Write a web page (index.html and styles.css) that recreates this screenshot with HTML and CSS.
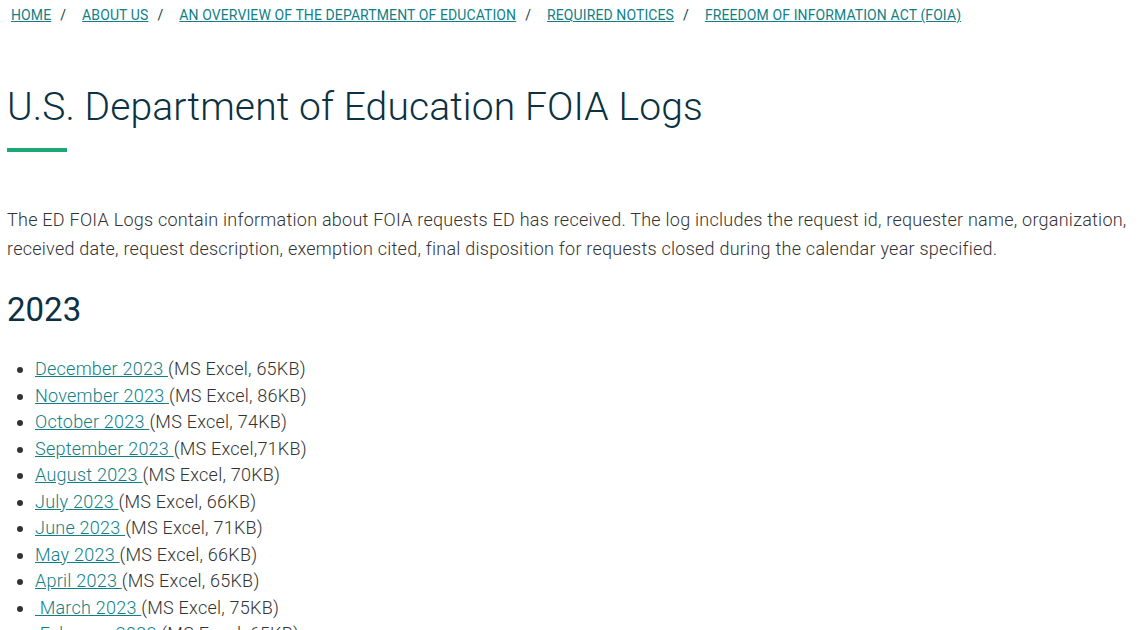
FILE: index.html
```html
<!DOCTYPE html>
<html lang="en">
<head>
  <meta charset="UTF-8" />
  <meta name="viewport" content="width=device-width, initial-scale=1.0" />
  <title>U.S. Department of Education FOIA Logs</title>
  <link rel="stylesheet" href="styles.css">
</head>
<body>
  <!-- breadcrumb -->
  <nav class="breadcrumb">
    <ol>
      <li><a href="#">Home</a></li>
      <li><a href="#">About Us</a></li>
      <li><a href="#">An Overview of the Department of Education</a></li>
      <li><a href="#">Required Notices</a></li>
      <li><a href="#">Freedom of Information Act (FOIA)</a></li>
    </ol>
  </nav>

  <main class="page">
    <h1 class="page-title">U.S. Department of Education FOIA Logs</h1>

    <p class="intro">The ED FOIA Logs contain information about FOIA requests ED has received. The log includes the request id, requester name, organization, received date, request description, exemption cited, final disposition for requests closed during the calendar year specified.</p>

    <h2 class="year">2023</h2>
    <ul class="logs">
      <li><a href="#">December 2023 </a>(MS Excel, 65KB)</li>
      <li><a href="#">November 2023 </a>(MS Excel, 86KB)</li>
      <li><a href="#">October 2023 </a>(MS Excel, 74KB)</li>
      <li><a href="#">September 2023 </a>(MS Excel,71KB)</li>
      <li><a href="#">August 2023 </a>(MS Excel, 70KB)</li>
      <li><a href="#">July 2023 </a>(MS Excel, 66KB)</li>
      <li><a href="#">June 2023 </a>(MS Excel, 71KB)</li>
      <li><a href="#">May 2023 </a>(MS Excel, 66KB)</li>
      <li><a href="#">April 2023 </a>(MS Excel, 65KB)</li>
      <li><a href="#">&nbsp;March 2023 </a>(MS Excel, 75KB)</li>
      <li><a href="#">&nbsp;February 2023 </a>(MS Excel, 65KB)</li>
      <li><a href="#">January 2023 </a>(MS Excel, 68KB)</li>
    </ul>
  </main>
</body>
</html>
```

FILE: styles.css
```css
/* base */
body {
  font-family: Roboto, "Liberation Sans", sans-serif;
  font-weight: 300;
  margin: 0;
  padding: 0 7px;
  color: #333;
  background: #fff;
}
a { color: #107f87; }

/* breadcrumb */
.breadcrumb ol {
  list-style: none;
  margin: 0;
  padding: 5px 4px 0;
  display: flex;
  flex-wrap: wrap;
  font-size: 14px;
  font-weight: 400;
  letter-spacing: 0.1px;
  text-transform: uppercase;
  line-height: 20px;
}
.breadcrumb li + li::before {
  content: "/";
  color: #1b3a46;
  margin: 0 16px 0 9px;
}
.breadcrumb a { color: #107f87; }

/* title */
.page-title {
  font-size: 39px;
  font-weight: 300;
  letter-spacing: 0.12px;
  color: #0b3142;
  margin: 57px 0 0;
  line-height: 50px;
}
.page-title::after {
  content: "";
  display: block;
  width: 60px;
  height: 4px;
  background: #1ea676;
  margin-top: 16px;
}

.intro {
  font-size: 18px;
  line-height: 29px;
  letter-spacing: 0.25px;
  margin: 53px 0 0;
}

.year {
  font-size: 33px;
  font-weight: 400;
  color: #0b3142;
  margin: 25px 0 0;
  line-height: 44px;
}

.logs {
  margin: 24px 0 0;
  padding-left: 28px;
  font-size: 18px;
  letter-spacing: 0.24px;
  line-height: 26.5px;
}
```
